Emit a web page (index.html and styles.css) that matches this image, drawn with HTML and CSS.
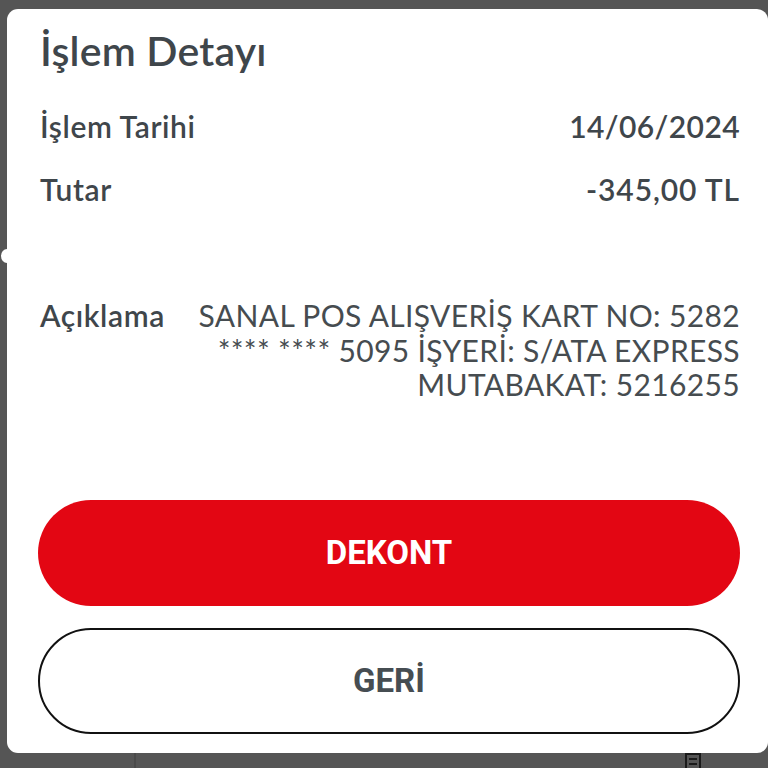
FILE: index.html
```html
<!DOCTYPE html>
<html lang="tr">
<head>
<meta charset="utf-8">
<title>İşlem Detayı</title>
<link rel="stylesheet" href="styles.css">
</head>
<body>
<div class="screen">
  <span class="notch"></span>
  <div class="card">
    <h1 class="title">İşlem Detayı</h1>
    <div class="row row-date">
      <span class="label">İşlem Tarihi</span>
      <span class="value">14/06/2024</span>
    </div>
    <div class="row row-amount">
      <span class="label">Tutar</span>
      <span class="value">-345,00 TL</span>
    </div>
    <div class="row row-desc">
      <span class="label">Açıklama</span>
      <span class="desc">SANAL POS ALIŞVERİŞ KART NO: 5282<br>**** **** 5095 İŞYERİ: S/ATA EXPRESS<br>MUTABAKAT: 5216255</span>
    </div>
    <button class="btn btn-primary">DEKONT</button>
    <button class="btn btn-outline">GERİ</button>
  </div>
  <div class="underbar">
    <span class="divider"></span>
    <svg class="underbar-icon" width="20" height="15" viewBox="0 0 20 15">
      <rect x="3" y="1" width="14" height="16" fill="none" stroke="#1a1a1a" stroke-width="2"/>
      <line x1="6" y1="6" x2="14" y2="6" stroke="#1a1a1a" stroke-width="2"/>
      <line x1="6" y1="11" x2="14" y2="11" stroke="#1a1a1a" stroke-width="2"/>
    </svg>
  </div>
</div>
</body>
</html>
```
FILE: styles.css
```css
* { box-sizing: border-box; }
html, body {
  margin: 0;
  padding: 0;
  background: #555555;
  width: 768px;
  height: 768px;
  overflow: hidden;
}
.screen {
  position: relative;
  width: 768px;
  height: 768px;
  display: flex;
  flex-direction: column;
  padding-top: 9px;
}
.notch {
  position: absolute;
  left: 1px;
  top: 249px;
  width: 12px;
  height: 14px;
  border-radius: 50%;
  background: #ffffff;
}
.card {
  margin-left: 7px;
  width: 761px;
  height: 744px;
  background: #ffffff;
  border-radius: 11px;
  padding: 18px 27px 0 31px;
  display: flex;
  flex-direction: column;
  font-family: "Lato", "Open Sans", sans-serif;
  color: #3f464b;
  position: relative;
  z-index: 1;
}
.title {
  margin: 0 0 0 2px;
  font-size: 41px;
  line-height: 48px;
  font-weight: 600;
  letter-spacing: 0.2px;
}
.row {
  display: flex;
  justify-content: space-between;
  align-items: flex-start;
  padding: 0 1px 0 2px;
  font-size: 30px;
  line-height: 36px;
}
.row-date { margin-top: 33px; }
.row-amount { margin-top: 27px; }
.row-desc {
  margin-top: 91px;
  line-height: 34.5px;
}
.label {
  font-weight: 600;
  letter-spacing: 0.6px;
}
.value {
  font-weight: 600;
  letter-spacing: 0.4px;
}
.row-amount .value { letter-spacing: 0.9px; }
.desc {
  text-align: right;
  font-weight: 400;
  letter-spacing: 0.35px;
  color: #464c50;
}
.btn {
  width: 702px;
  height: 106px;
  border-radius: 53px;
  font-family: "Roboto", "Liberation Sans", sans-serif;
  font-weight: 700;
  font-size: 33px;
  letter-spacing: 0;
  display: flex;
  align-items: center;
  justify-content: center;
  padding: 0;
  cursor: pointer;
}
.btn-primary {
  margin-top: 98px;
  background: #e30613;
  color: #ffffff;
  border: none;
}
.btn-outline {
  margin-top: 22px;
  background: #ffffff;
  color: #464d52;
  border: 2px solid #111111;
}
.underbar {
  flex: 1;
  display: flex;
  align-items: flex-start;
  padding-left: 134px;
}
.divider {
  width: 2px;
  height: 15px;
  background: #4a4a4a;
}
.underbar-icon {
  margin-left: 547px;
  display: block;
}
```
